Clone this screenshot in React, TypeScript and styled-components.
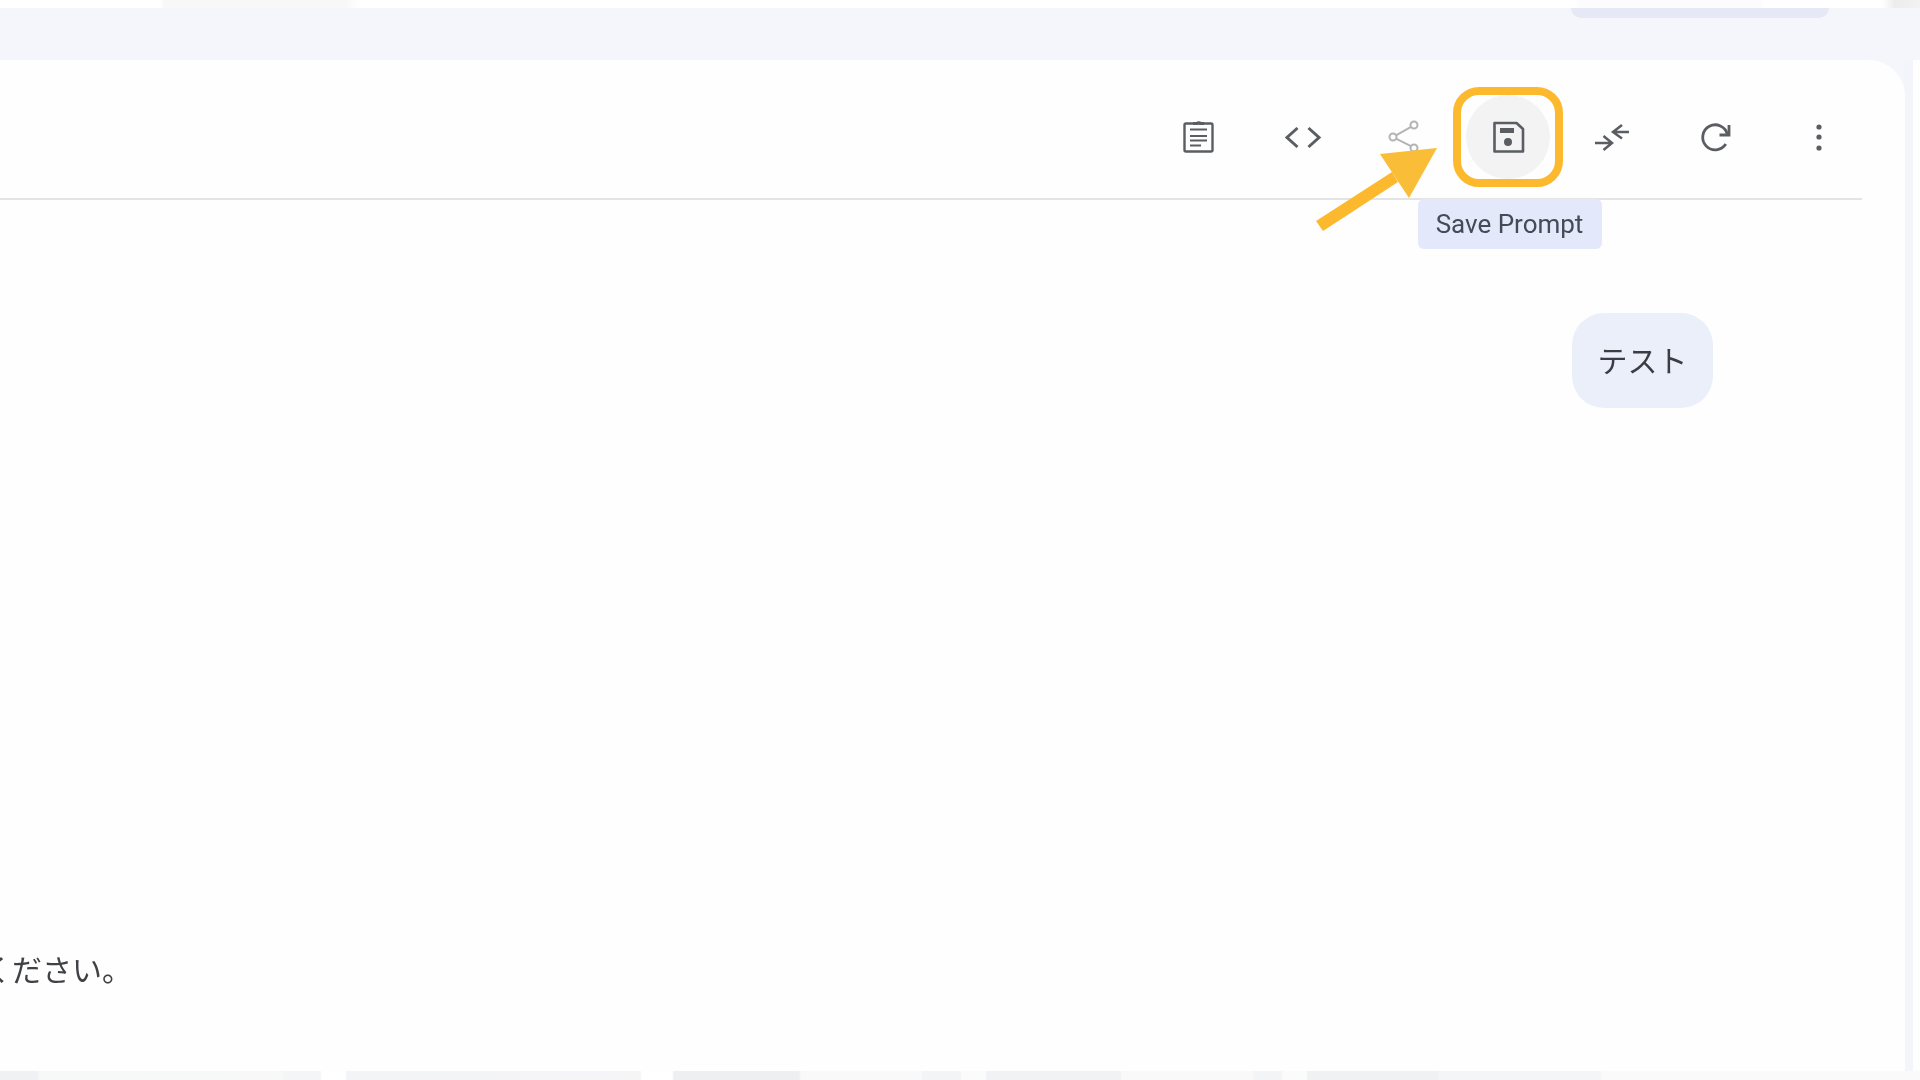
import * as React from 'react';
import styled, { createGlobalStyle } from 'styled-components';

const GlobalStyle = createGlobalStyle`
  html, body {
    margin: 0;
    padding: 0;
    background: #fff;
  }
  * {
    box-sizing: border-box;
  }
`;

const ClipboardIcon = () => (
  <Icon viewBox="-2 0 36 36" fill="none" stroke="currentColor" strokeWidth="2.4">
    <rect x="3.5" y="4.5" width="28" height="28" rx="1.5" />
    <path d="M12 4.5h4a2.2 2.2 0 0 1 3.5 0H23" strokeWidth="3" />
    <path d="M9 10.5h17M9 17h17M9 21.5h17M9 26.5h11" strokeWidth="2.2" />
  </Icon>
);

const CodeIcon = () => (
  <Icon viewBox="-1.5 0 36 36" fill="none" stroke="currentColor" strokeWidth="3">
    <path d="M13 9L2.5 18.5 13 28" />
    <path d="M24 9l10.5 9.5L24 28" />
  </Icon>
);

const ShareIcon = () => (
  <Icon viewBox="1 0 36 36" fill="none" stroke="#b4b4b4" strokeWidth="2">
    <circle cx="29" cy="6" r="3.5" />
    <circle cx="8" cy="18" r="3.5" />
    <circle cx="29" cy="29" r="3.5" />
    <path d="M11 16.3L26 7.8M11 19.7L26 27.2" />
  </Icon>
);

const SaveIcon = () => (
  <Icon viewBox="0 0 36 36" fill="none" stroke="currentColor" strokeWidth="2.6">
    <path d="M4.5 4h22L33 10v22.5H4.5z" strokeLinejoin="round" />
    <rect x="10" y="9" width="14" height="5" fill="currentColor" stroke="none" />
    <circle cx="18" cy="23" r="4" fill="currentColor" stroke="none" />
  </Icon>
);

const CompareIcon = () => (
  <Icon viewBox="-1 0 36 36" fill="none" stroke="currentColor" strokeWidth="2.5">
    <path d="M1 24h17M9.5 17l8.5 7-8.5 7" />
    <path d="M35 13H19M28 6l-9 7 9 6.5" />
  </Icon>
);

const RefreshIcon = () => (
  <Icon viewBox="0 0 36 36" fill="none" stroke="currentColor" strokeWidth="2.8">
    <path d="M30.4 15.5A12.5 12.5 0 1 0 28.8 25" />
    <path d="M32 6v10h-9.5" />
  </Icon>
);

const MoreIcon = () => (
  <Icon viewBox="0 0 36 36" fill="currentColor">
    <circle cx="19" cy="8" r="2.6" />
    <circle cx="19" cy="18" r="2.6" />
    <circle cx="19" cy="29" r="2.6" />
  </Icon>
);

export default function App(): any {
  return (
    <Page>
      <GlobalStyle />
      <TopStrip />
      <Band>
        <ClippedPill />
      </Band>
      <Middle>
        <Card>
          <Header>
            <Toolbar>
              <ToolButton>
                <ClipboardIcon />
              </ToolButton>
              <ToolButton>
                <CodeIcon />
              </ToolButton>
              <ToolButton>
                <ShareIcon />
              </ToolButton>
              <ToolButton $active>
                <SaveIcon />
                <Highlight />
                <Arrow viewBox="0 0 135 95">
                  <path d="M6 81L82 32 88 42 13 91z" fill="#fdb92e" />
                  <path d="M70 14L127 8 99 58z" fill="#f9bd38" />
                </Arrow>
                <Tooltip>Save Prompt</Tooltip>
              </ToolButton>
              <ToolButton>
                <CompareIcon />
              </ToolButton>
              <ToolButton>
                <RefreshIcon />
              </ToolButton>
              <ToolButton>
                <MoreIcon />
              </ToolButton>
            </Toolbar>
          </Header>
          <Messages>
            <Bubble>テスト</Bubble>
            <Reply>ください。</Reply>
          </Messages>
        </Card>
        <Gutter />
        <Edge />
      </Middle>
      <BottomStrip />
    </Page>
  );
}

const Page = styled.div`
  width: 1920px;
  height: 1080px;
  display: flex;
  flex-direction: column;
  overflow: hidden;
  background: #f5f6fb;
  font-family: Roboto, 'Noto Sans CJK JP', sans-serif;
`;

const TopStrip = styled.div`
  height: 8px;
  flex: none;
  background: linear-gradient(
    90deg,
    #fff 0,
    #fff 160px,
    #f8f8f6 165px,
    #f8f8f6 345px,
    #fff 360px,
    #fff 1575px,
    #fcfcfc 1580px,
    #fcfcfc 1760px,
    #fff 1765px,
    #fff 1882px,
    #ecedeb 1895px,
    #f2f2f1 1920px
  );
`;

const Band = styled.div`
  height: 52px;
  flex: none;
  display: flex;
  justify-content: flex-end;
  align-items: flex-start;
  padding-right: 91px;
`;

const ClippedPill = styled.div`
  width: 258px;
  height: 10px;
  background: #e5e9f6;
  border-radius: 0 0 18px 18px;
`;

const Middle = styled.div`
  flex: 1;
  min-height: 0;
  display: flex;
`;

const Card = styled.div`
  flex: 1;
  margin-left: -40px;
  display: flex;
  flex-direction: column;
  background: #fefefe;
  border-top-right-radius: 36px;
`;

const Header = styled.div`
  margin-right: 43px;
  padding: 35px 2px 19px 0;
  border-bottom: 2px solid #e4e4e4;
`;

const Toolbar = styled.div`
  display: flex;
  justify-content: flex-end;
  gap: 19.5px;
`;

const ToolButton = styled.div<{ $active?: boolean }>`
  position: relative;
  width: 84px;
  height: 84px;
  display: flex;
  align-items: center;
  justify-content: center;
  border-radius: 50%;
  color: #5a5d61;
  background: ${(p) => (p.$active ? '#f3f3f3' : 'transparent')};
`;

const Icon = styled.svg`
  width: 36px;
  height: 36px;
  overflow: visible;
  filter: blur(0.5px);
`;

const Highlight = styled.div`
  position: absolute;
  top: -8px;
  bottom: -8px;
  left: -13px;
  right: -13px;
  border: 8px solid #fdb92e;
  border-radius: 26px;
`;

const Arrow = styled.svg`
  position: absolute;
  left: -156px;
  top: 45px;
  width: 135px;
  height: 95px;
`;

const Tooltip = styled.div`
  position: absolute;
  left: -48px;
  top: 104px;
  width: 184px;
  height: 50px;
  display: flex;
  align-items: center;
  justify-content: center;
  padding-bottom: 1px;
  background: #e3e9fa;
  border-radius: 6px;
  color: #454a56;
  font-size: 26px;
  white-space: nowrap;
  filter: blur(0.3px);
`;

const Messages = styled.div`
  flex: 1;
  display: flex;
  flex-direction: column;
  padding: 113px 192px 83px 22px;
`;

const Bubble = styled.div`
  align-self: flex-end;
  width: 141px;
  height: 95px;
  display: flex;
  align-items: center;
  justify-content: center;
  padding-bottom: 4px;
  background: #eaeffa;
  border-radius: 32px;
  color: #3a3d42;
  font-family: 'Noto Sans CJK JP', sans-serif;
  font-size: 30px;
  filter: blur(0.3px);
`;

const Reply = styled.div`
  margin-top: auto;
  color: #3f4145;
  font-family: 'Noto Sans CJK JP', sans-serif;
  font-size: 30px;
  line-height: 40px;
  filter: blur(0.3px);
`;

const Gutter = styled.div`
  width: 8px;
  flex: none;
  background: #f3f5fa;
`;

const Edge = styled.div`
  width: 7px;
  flex: none;
  background: #fefefe;
`;

const BottomStrip = styled.div`
  height: 9px;
  flex: none;
  background: linear-gradient(
    90deg,
    #f0f1f3 0,
    #f0f1f3 37px,
    #f7f8f8 40px,
    #f8f8f8 280px,
    #f4f5f6 285px,
    #f4f5f6 320px,
    #fff 322px,
    #fff 345px,
    #f3f4f6 347px,
    #f5f5f6 640px,
    #fff 642px,
    #fff 672px,
    #eeeff1 674px,
    #eeeff1 799px,
    #f9f9f9 801px,
    #f9f9f9 921px,
    #f3f4f5 923px,
    #f3f4f5 960px,
    #fbfbfb 962px,
    #fbfbfb 985px,
    #f1f2f4 987px,
    #f1f2f4 1120px,
    #f9f9fa 1122px,
    #f9f9fa 1252px,
    #f3f4f5 1254px,
    #f3f4f5 1281px,
    #fbfbfb 1283px,
    #fbfbfb 1306px,
    #f0f1f2 1308px,
    #f0f1f2 1437px,
    #f4f5f6 1439px,
    #f4f5f6 1600px,
    #fafafa 1602px,
    #fafafa 1920px
  );
`;
